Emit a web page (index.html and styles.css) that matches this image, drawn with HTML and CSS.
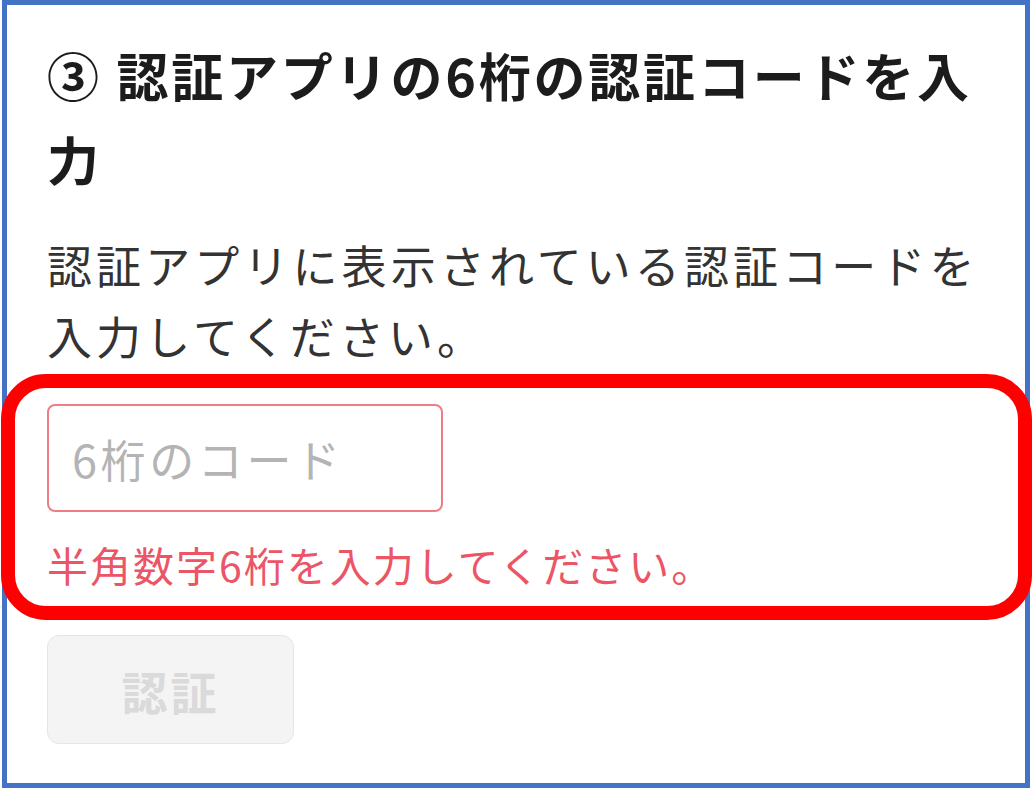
FILE: index.html
```html
<!DOCTYPE html>
<html lang="ja">
<head>
<meta charset="utf-8">
<link rel="stylesheet" href="styles.css">
</head>
<body>
<div class="frame">
  <h2 class="title">③ 認証アプリの6桁の認証コードを入力</h2>
  <p class="desc">認証アプリに表示されている認証コードを入力してください。</p>
  <input class="code" type="text" placeholder="6桁のコード">
  <p class="error">半角数字6桁を入力してください。</p>
  <button class="submit" type="button" disabled>認証</button>
  <div class="highlight"></div>
</div>
</body>
</html>
```
FILE: styles.css
```css
html, body {
  margin: 0;
  padding: 0;
  background: #ffffff;
  overflow: hidden;
}
body {
  width: 1032px;
  height: 789px;
  font-family: "Noto Sans CJK JP", "Noto Sans", sans-serif;
}
.frame {
  position: relative;
  box-sizing: border-box;
  margin-left: 2px;
  width: 1028px;
  height: 788px;
  border: 5px solid #4472c4;
  padding: 28px 0 0 40px;
  display: flex;
  flex-direction: column;
  align-items: flex-start;
}
.title {
  margin: 0;
  width: 960px;
  font-size: 52px;
  line-height: 84px;
  font-weight: 700;
  letter-spacing: 2.8px;
  color: #1c1c1c;
}
.desc {
  margin: 28px 0 0;
  width: 960px;
  font-size: 45px;
  line-height: 71px;
  letter-spacing: 4.1px;
  color: #333333;
}
.code {
  margin: 33px 0 0;
  box-sizing: border-box;
  width: 396px;
  height: 108px;
  border: 2px solid #f07c86;
  border-radius: 8px;
  padding: 0 0 0 23px;
  font-family: inherit;
  font-size: 45px;
  letter-spacing: 3.6px;
  color: #333;
  background: #fff;
  outline: none;
}
.code::placeholder {
  color: #b4b4b4;
}
.error {
  margin: 22px 0 0;
  font-size: 41px;
  line-height: 60px;
  letter-spacing: 2px;
  color: #ec5566;
}
.submit {
  margin: 41px 0 0;
  box-sizing: border-box;
  width: 247px;
  height: 109px;
  border: 1px solid #e6e6e6;
  border-radius: 12px;
  background: #f4f4f4;
  font-family: inherit;
  font-size: 46px;
  font-weight: 700;
  letter-spacing: 3px;
  color: #dadada;
  padding: 0;
}
.highlight {
  position: absolute;
  left: -6px;
  top: 369px;
  width: 1031px;
  height: 246px;
  box-sizing: border-box;
  border: 14px solid #ff0000;
  border-radius: 45px;
  pointer-events: none;
}
```
